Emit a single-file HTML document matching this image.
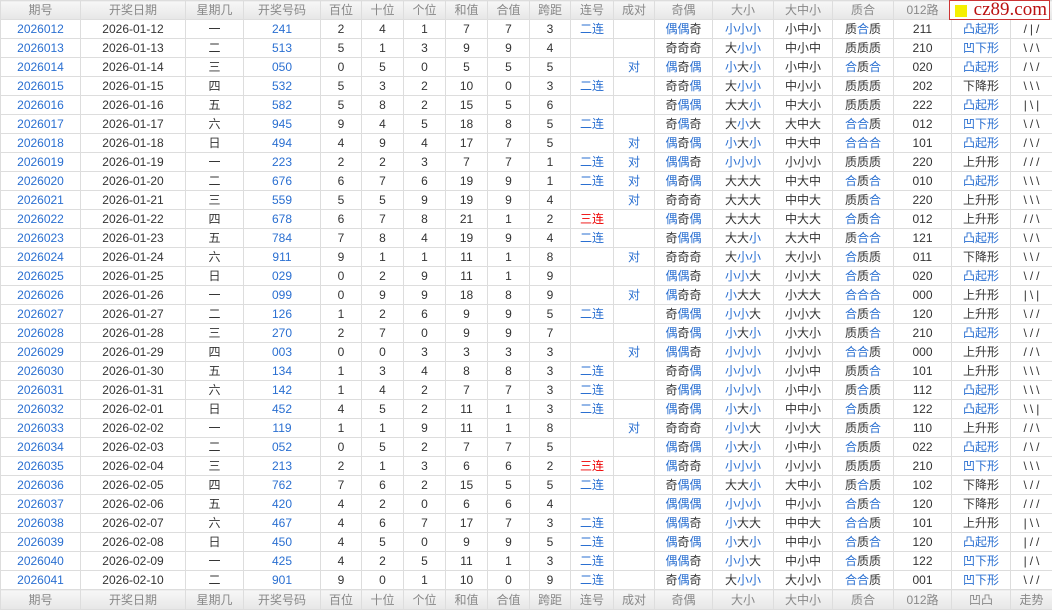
<!DOCTYPE html>
<html><head><meta charset="utf-8">
<style>
body{margin:0;background:#fff;width:1052px;height:610px;overflow:hidden;font-family:"Liberation Sans","Noto Sans CJK SC",sans-serif;}
table{border-collapse:collapse;table-layout:fixed;width:1052px;font-size:12px;color:#333}
td,th{border:1px solid #ddd;height:18px;padding:0;text-align:center;white-space:nowrap;overflow:hidden;line-height:18px}
th{font-weight:normal;color:#888;background:linear-gradient(#f7f7f7,#e6e6e6);height:18px}
tr.f th{height:19px}
td:nth-child(1),td:nth-child(4),td:nth-child(11),td:nth-child(12){color:#2a6fd1}
td:nth-child(19){letter-spacing:3px;padding-left:3px}
.b{color:#2a6fd1}.r{color:#e00}.k{color:#333}
#logo{position:absolute;left:949px;top:0;width:101px;height:20px;background:#fff;border:1px solid #c33;box-sizing:border-box;font-family:"Liberation Serif",serif;font-size:19px;color:#b11;line-height:18px;text-align:right;padding-right:2px}
#logo i{position:absolute;left:5px;top:4px;width:12px;height:12px;background:#f5ef00}
</style></head><body>
<div id="logo"><i></i>cz89.com</div>
<table>
<colgroup><col style="width:80px"><col style="width:105px"><col style="width:58px"><col style="width:77px"><col style="width:41px"><col style="width:42px"><col style="width:42px"><col style="width:42px"><col style="width:42px"><col style="width:41px"><col style="width:43px"><col style="width:41px"><col style="width:58px"><col style="width:61px"><col style="width:59px"><col style="width:61px"><col style="width:58px"><col style="width:59px"><col style="width:42px"></colgroup>
<tr><th>期号<th>开奖日期<th>星期几<th>开奖号码<th>百位<th>十位<th>个位<th>和值<th>合值<th>跨距<th>连号<th>成对<th>奇偶<th>大小<th>大中小<th>质合<th>012路<th>凹凸<th>走势</tr>
<tr><td>2026012<td>2026-01-12<td>一<td>241<td>2<td>4<td>1<td>7<td>7<td>3<td>二连<td><td>偶偶奇<td>小小小<td>小中小<td>质合质<td>211<td>凸起形<td>/|/</tr>
<tr><td>2026013<td>2026-01-13<td>二<td>513<td>5<td>1<td>3<td>9<td>9<td>4<td><td><td>奇奇奇<td>大小小<td>中小中<td>质质质<td>210<td>凹下形<td>\/\</tr>
<tr><td>2026014<td>2026-01-14<td>三<td>050<td>0<td>5<td>0<td>5<td>5<td>5<td><td>对<td>偶奇偶<td>小大小<td>小中小<td>合质合<td>020<td>凸起形<td>/\/</tr>
<tr><td>2026015<td>2026-01-15<td>四<td>532<td>5<td>3<td>2<td>10<td>0<td>3<td>二连<td><td>奇奇偶<td>大小小<td>中小小<td>质质质<td>202<td>下降形<td>\\\</tr>
<tr><td>2026016<td>2026-01-16<td>五<td>582<td>5<td>8<td>2<td>15<td>5<td>6<td><td><td>奇偶偶<td>大大小<td>中大小<td>质质质<td>222<td>凸起形<td>|\|</tr>
<tr><td>2026017<td>2026-01-17<td>六<td>945<td>9<td>4<td>5<td>18<td>8<td>5<td>二连<td><td>奇偶奇<td>大小大<td>大中大<td>合合质<td>012<td>凹下形<td>\/\</tr>
<tr><td>2026018<td>2026-01-18<td>日<td>494<td>4<td>9<td>4<td>17<td>7<td>5<td><td>对<td>偶奇偶<td>小大小<td>中大中<td>合合合<td>101<td>凸起形<td>/\/</tr>
<tr><td>2026019<td>2026-01-19<td>一<td>223<td>2<td>2<td>3<td>7<td>7<td>1<td>二连<td>对<td>偶偶奇<td>小小小<td>小小小<td>质质质<td>220<td>上升形<td>///</tr>
<tr><td>2026020<td>2026-01-20<td>二<td>676<td>6<td>7<td>6<td>19<td>9<td>1<td>二连<td>对<td>偶奇偶<td>大大大<td>中大中<td>合质合<td>010<td>凸起形<td>\\\</tr>
<tr><td>2026021<td>2026-01-21<td>三<td>559<td>5<td>5<td>9<td>19<td>9<td>4<td><td>对<td>奇奇奇<td>大大大<td>中中大<td>质质合<td>220<td>上升形<td>\\\</tr>
<tr><td>2026022<td>2026-01-22<td>四<td>678<td>6<td>7<td>8<td>21<td>1<td>2<td>三连<td><td>偶奇偶<td>大大大<td>中大大<td>合质合<td>012<td>上升形<td>//\</tr>
<tr><td>2026023<td>2026-01-23<td>五<td>784<td>7<td>8<td>4<td>19<td>9<td>4<td>二连<td><td>奇偶偶<td>大大小<td>大大中<td>质合合<td>121<td>凸起形<td>\/\</tr>
<tr><td>2026024<td>2026-01-24<td>六<td>911<td>9<td>1<td>1<td>11<td>1<td>8<td><td>对<td>奇奇奇<td>大小小<td>大小小<td>合质质<td>011<td>下降形<td>\\/</tr>
<tr><td>2026025<td>2026-01-25<td>日<td>029<td>0<td>2<td>9<td>11<td>1<td>9<td><td><td>偶偶奇<td>小小大<td>小小大<td>合质合<td>020<td>凸起形<td>\//</tr>
<tr><td>2026026<td>2026-01-26<td>一<td>099<td>0<td>9<td>9<td>18<td>8<td>9<td><td>对<td>偶奇奇<td>小大大<td>小大大<td>合合合<td>000<td>上升形<td>|\|</tr>
<tr><td>2026027<td>2026-01-27<td>二<td>126<td>1<td>2<td>6<td>9<td>9<td>5<td>二连<td><td>奇偶偶<td>小小大<td>小小大<td>合质合<td>120<td>上升形<td>\//</tr>
<tr><td>2026028<td>2026-01-28<td>三<td>270<td>2<td>7<td>0<td>9<td>9<td>7<td><td><td>偶奇偶<td>小大小<td>小大小<td>质质合<td>210<td>凸起形<td>\//</tr>
<tr><td>2026029<td>2026-01-29<td>四<td>003<td>0<td>0<td>3<td>3<td>3<td>3<td><td>对<td>偶偶奇<td>小小小<td>小小小<td>合合质<td>000<td>上升形<td>//\</tr>
<tr><td>2026030<td>2026-01-30<td>五<td>134<td>1<td>3<td>4<td>8<td>8<td>3<td>二连<td><td>奇奇偶<td>小小小<td>小小中<td>质质合<td>101<td>上升形<td>\\\</tr>
<tr><td>2026031<td>2026-01-31<td>六<td>142<td>1<td>4<td>2<td>7<td>7<td>3<td>二连<td><td>奇偶偶<td>小小小<td>小中小<td>质合质<td>112<td>凸起形<td>\\\</tr>
<tr><td>2026032<td>2026-02-01<td>日<td>452<td>4<td>5<td>2<td>11<td>1<td>3<td>二连<td><td>偶奇偶<td>小大小<td>中中小<td>合质质<td>122<td>凸起形<td>\\|</tr>
<tr><td>2026033<td>2026-02-02<td>一<td>119<td>1<td>1<td>9<td>11<td>1<td>8<td><td>对<td>奇奇奇<td>小小大<td>小小大<td>质质合<td>110<td>上升形<td>//\</tr>
<tr><td>2026034<td>2026-02-03<td>二<td>052<td>0<td>5<td>2<td>7<td>7<td>5<td><td><td>偶奇偶<td>小大小<td>小中小<td>合质质<td>022<td>凸起形<td>/\/</tr>
<tr><td>2026035<td>2026-02-04<td>三<td>213<td>2<td>1<td>3<td>6<td>6<td>2<td>三连<td><td>偶奇奇<td>小小小<td>小小小<td>质质质<td>210<td>凹下形<td>\\\</tr>
<tr><td>2026036<td>2026-02-05<td>四<td>762<td>7<td>6<td>2<td>15<td>5<td>5<td>二连<td><td>奇偶偶<td>大大小<td>大中小<td>质合质<td>102<td>下降形<td>\//</tr>
<tr><td>2026037<td>2026-02-06<td>五<td>420<td>4<td>2<td>0<td>6<td>6<td>4<td><td><td>偶偶偶<td>小小小<td>中小小<td>合质合<td>120<td>下降形<td>///</tr>
<tr><td>2026038<td>2026-02-07<td>六<td>467<td>4<td>6<td>7<td>17<td>7<td>3<td>二连<td><td>偶偶奇<td>小大大<td>中中大<td>合合质<td>101<td>上升形<td>|\\</tr>
<tr><td>2026039<td>2026-02-08<td>日<td>450<td>4<td>5<td>0<td>9<td>9<td>5<td>二连<td><td>偶奇偶<td>小大小<td>中中小<td>合质合<td>120<td>凸起形<td>|//</tr>
<tr><td>2026040<td>2026-02-09<td>一<td>425<td>4<td>2<td>5<td>11<td>1<td>3<td>二连<td><td>偶偶奇<td>小小大<td>中小中<td>合质质<td>122<td>凹下形<td>|/\</tr>
<tr><td>2026041<td>2026-02-10<td>二<td>901<td>9<td>0<td>1<td>10<td>0<td>9<td>二连<td><td>奇偶奇<td>大小小<td>大小小<td>合合质<td>001<td>凹下形<td>\//</tr>
<tr class="f"><th>期号<th>开奖日期<th>星期几<th>开奖号码<th>百位<th>十位<th>个位<th>和值<th>合值<th>跨距<th>连号<th>成对<th>奇偶<th>大小<th>大中小<th>质合<th>012路<th>凹凸<th>走势</tr>
</table>
<script>
document.querySelectorAll('tr').forEach(function(tr){
 var c=tr.querySelectorAll('td'); if(!c.length)return;
 if(c[10].textContent=='三连')c[10].style.color='#e00';
 [[12,'偶'],[13,'小'],[15,'合']].forEach(function(p){
  var t=c[p[0]].textContent; c[p[0]].innerHTML=t.split('').map(function(ch){return ch==p[1]?'<span class="b">'+ch+'</span>':ch}).join('');
 });
 var a=c[17].textContent; c[17].className=(a[0]=='凸'||a[0]=='凹')?'b':'k';
});
</script>
</body></html>
